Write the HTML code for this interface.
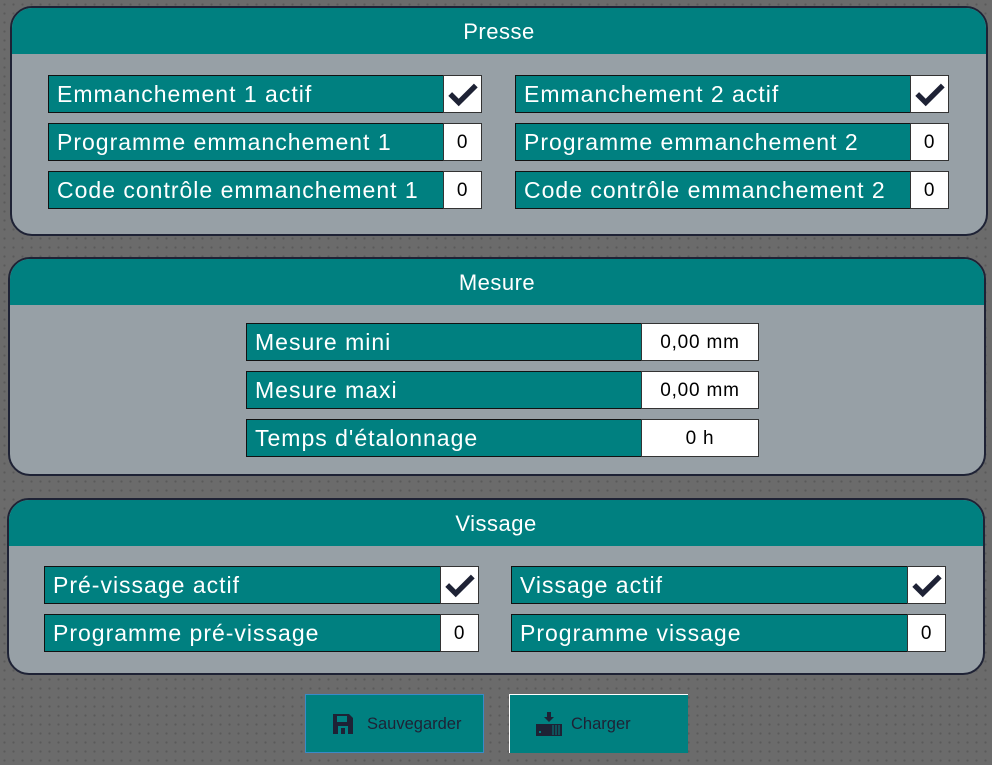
<!DOCTYPE html>
<html><head><meta charset="utf-8"><style>
*{box-sizing:border-box;margin:0;padding:0}
body{width:992px;height:765px;overflow:hidden;background-color:#6b6b6b;
background-image:radial-gradient(circle,#5a5a5a 1px,transparent 1.3px);background-size:9px 9px;
font-family:"Liberation Sans",sans-serif;position:relative}
.panel{position:absolute;background:#97a0a6;border:2px solid #1e2235;border-radius:22px;overflow:hidden}
.hdr{background:#008080;color:#fff;font-size:22px;text-align:center;height:46px;line-height:48px;letter-spacing:0.5px}
.f{position:absolute;height:38px;background:#008080;border:1.5px solid #111;color:#fff;font-size:23px;line-height:37px;padding-left:8px;letter-spacing:1px;white-space:nowrap}
.v{position:absolute;right:-1px;top:-1px;height:38px;background:#fff;border:1.5px solid #333;color:#000;font-size:19px;text-align:center;line-height:37px;letter-spacing:0.8px}
.btn{position:absolute;top:694px;height:59px;width:179px;background:#008080;color:#1e2235;font-size:16.5px;line-height:59px}
</style></head><body>
<div class="panel" style="left:10px;top:6px;width:978px;height:230px"><div class="hdr">Presse</div></div>
<div class="panel" style="left:8px;top:257px;width:978px;height:219px"><div class="hdr">Mesure</div></div>
<div class="panel" style="left:7px;top:498px;width:978px;height:177px"><div class="hdr">Vissage</div></div>

<div class="f" style="left:48px;top:75px;width:434px">Emmanchement 1 actif<div class="v" style="width:39px"><svg width="32" height="26" viewBox="0 0 30 24" style="margin-top:5px"><path d="M3 12 L11 20 L27 4" stroke="#1e2235" stroke-width="5" fill="none"/></svg></div></div>
<div class="f" style="left:48px;top:123px;width:434px">Programme emmanchement 1<div class="v" style="width:39px">0</div></div>
<div class="f" style="left:48px;top:171px;width:434px">Code contrôle emmanchement 1<div class="v" style="width:39px">0</div></div>
<div class="f" style="left:515px;top:75px;width:434px">Emmanchement 2 actif<div class="v" style="width:39px"><svg width="32" height="26" viewBox="0 0 30 24" style="margin-top:5px"><path d="M3 12 L11 20 L27 4" stroke="#1e2235" stroke-width="5" fill="none"/></svg></div></div>
<div class="f" style="left:515px;top:123px;width:434px">Programme emmanchement 2<div class="v" style="width:39px">0</div></div>
<div class="f" style="left:515px;top:171px;width:434px">Code contrôle emmanchement 2<div class="v" style="width:39px">0</div></div>

<div class="f" style="left:246px;top:323px;width:513px">Mesure mini<div class="v" style="width:118px">0,00 mm</div></div>
<div class="f" style="left:246px;top:371px;width:513px">Mesure maxi<div class="v" style="width:118px">0,00 mm</div></div>
<div class="f" style="left:246px;top:419px;width:513px">Temps d'étalonnage<div class="v" style="width:118px">0 h</div></div>

<div class="f" style="left:44px;top:566px;width:435px">Pré-vissage actif<div class="v" style="width:39px"><svg width="32" height="26" viewBox="0 0 30 24" style="margin-top:5px"><path d="M3 12 L11 20 L27 4" stroke="#1e2235" stroke-width="5" fill="none"/></svg></div></div>
<div class="f" style="left:44px;top:614px;width:435px">Programme pré-vissage<div class="v" style="width:39px">0</div></div>
<div class="f" style="left:511px;top:566px;width:435px">Vissage actif<div class="v" style="width:39px"><svg width="32" height="26" viewBox="0 0 30 24" style="margin-top:5px"><path d="M3 12 L11 20 L27 4" stroke="#1e2235" stroke-width="5" fill="none"/></svg></div></div>
<div class="f" style="left:511px;top:614px;width:435px">Programme vissage<div class="v" style="width:39px">0</div></div>

<div class="btn" style="left:305px;border:1px solid #3a8ac8">
<svg width="20" height="20" viewBox="0 0 20 20" style="position:absolute;left:27px;top:19px"><path d="M0 0H16L20 4V20H0Z" fill="#1e2235"/><rect x="4" y="2" width="10" height="6" fill="#008080"/><rect x="5" y="12" width="10" height="8" fill="#008080"/><rect x="8" y="14" width="4" height="6" fill="#1e2235"/></svg>
<span style="position:absolute;left:61px">Sauvegarder</span></div>
<div class="btn" style="left:509px;border-top:1px solid #fff;border-left:1px solid #fff">
<svg width="26" height="24" viewBox="0 0 26 24" style="position:absolute;left:26px;top:17px"><path d="M11 0H15V5H18L13 10L8 5H11Z" fill="#1e2235"/><rect x="0" y="12" width="26" height="12" fill="#1e2235"/><path d="M17 13V23M20 13V23M23 13V23" stroke="#008080" stroke-width="1"/><rect x="3" y="19" width="2" height="2" fill="#008080"/></svg>
<span style="position:absolute;left:61px">Charger</span></div>
</body></html>
